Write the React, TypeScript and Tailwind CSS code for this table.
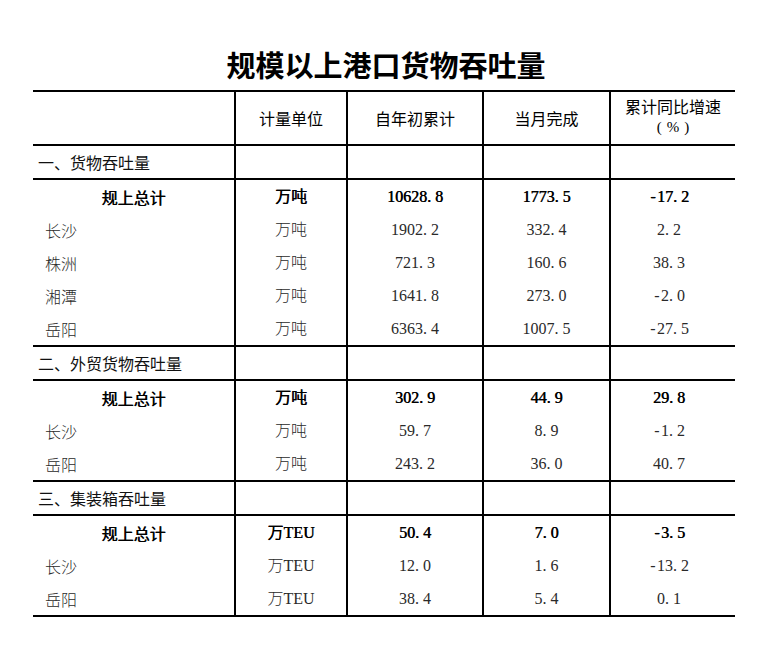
const cols = "grid grid-cols-[201px_112px_136px_127px_126px]";

type Row = { name: string; unit: string; ytd: string; month: string; rate: string; total?: boolean };
type Section = { title: string; rows: Row[] };

const sections: Section[] = [
	{
		title: "一、货物吞吐量",
		rows: [
			{ name: "规上总计", unit: "万吨", ytd: "10628.8", month: "1773.5", rate: "-17.2", total: true },
			{ name: "长沙", unit: "万吨", ytd: "1902.2", month: "332.4", rate: "2.2" },
			{ name: "株洲", unit: "万吨", ytd: "721.3", month: "160.6", rate: "38.3" },
			{ name: "湘潭", unit: "万吨", ytd: "1641.8", month: "273.0", rate: "-2.0" },
			{ name: "岳阳", unit: "万吨", ytd: "6363.4", month: "1007.5", rate: "-27.5" },
		],
	},
	{
		title: "二、外贸货物吞吐量",
		rows: [
			{ name: "规上总计", unit: "万吨", ytd: "302.9", month: "44.9", rate: "29.8", total: true },
			{ name: "长沙", unit: "万吨", ytd: "59.7", month: "8.9", rate: "-1.2" },
			{ name: "岳阳", unit: "万吨", ytd: "243.2", month: "36.0", rate: "40.7" },
		],
	},
	{
		title: "三、集装箱吞吐量",
		rows: [
			{ name: "规上总计", unit: "万TEU", ytd: "50.4", month: "7.0", rate: "-3.5", total: true },
			{ name: "长沙", unit: "万TEU", ytd: "12.0", month: "1.6", rate: "-13.2" },
			{ name: "岳阳", unit: "万TEU", ytd: "38.4", month: "5.4", rate: "0.1" },
		],
	},
];

// digits are half-width like SimSun, so the dot and minus get a full 8px cell
function Num({ value }: { value: string }) {
	return (
		<span className="font-['Liberation_Serif',serif]">
			{value.split("").map((ch, i) =>
				ch === "." || ch === "-" ? (
					<span key={i} className={`inline-block w-[8px] ${ch === "-" ? "text-center" : "text-left"}`}>
						{ch}
					</span>
				) : (
					<span key={i}>{ch}</span>
				)
			)}
		</span>
	);
}

function DataRow({ row }: { row: Row }) {
	const tone = row.total ? "text-black [text-shadow:0.4px_0_0_#000]" : "font-light text-[#2a2a2a]";
	return (
		<div className={`${cols} h-[33px] text-[16px] leading-none ${tone}`}>
			<div className={`flex items-center ${row.total ? "justify-center" : "pl-[12px]"}`}>{row.name}</div>
			<div className="flex items-center justify-center border-l-2 border-black font-['Liberation_Serif','Noto_Sans_CJK_SC',serif]">
				{row.unit}
			</div>
			<div className="flex items-center justify-center border-l-2 border-black">
				<Num value={row.ytd} />
			</div>
			<div className="flex items-center justify-center border-l-2 border-black">
				<Num value={row.month} />
			</div>
			<div className="flex items-center justify-center border-l-2 border-black pr-[8px]">
				<Num value={row.rate} />
			</div>
		</div>
	);
}

export default function App() {
	return (
		<div className="w-[776px] h-[654px] bg-white font-['Noto_Sans_CJK_SC',sans-serif] text-black">
			<div className="h-[90px] flex items-end justify-center pb-[11px] pr-[4px]">
				<h1 className="text-[29px] leading-none font-bold">规模以上港口货物吞吐量</h1>
			</div>

			<div className="ml-[33px] w-[702px] border-b-2 border-black">
				{/* header */}
				<div className={`${cols} h-[54px] border-t-2 border-black text-[16px] leading-[20px]`}>
					<div />
					<div className="flex items-center justify-center border-l-2 border-black">计量单位</div>
					<div className="flex items-center justify-center border-l-2 border-black">自年初累计</div>
					<div className="flex items-center justify-center border-l-2 border-black">当月完成</div>
					<div className="flex flex-col items-center justify-center gap-[3px] border-l-2 border-black pb-[4px]">
						<span className="leading-[18px]">累计同比增速</span>
						<span className="leading-[18px] text-[15px] tracking-[5px] pl-[5px] font-['Liberation_Serif',serif]">(%)</span>
					</div>
				</div>

				{sections.map((s) => (
					<div key={s.title}>
						<div className={`${cols} h-[34px] border-t-2 border-black text-[16px] text-[#111]`}>
							<div className="flex items-center pl-[5px]">{s.title}</div>
							<div className="border-l-2 border-black" />
							<div className="border-l-2 border-black" />
							<div className="border-l-2 border-black" />
							<div className="border-l-2 border-black" />
						</div>
						<div className="border-t-2 border-black">
							{s.rows.map((r) => (
								<DataRow key={s.title + r.name} row={r} />
							))}
						</div>
					</div>
				))}
			</div>
		</div>
	);
}
